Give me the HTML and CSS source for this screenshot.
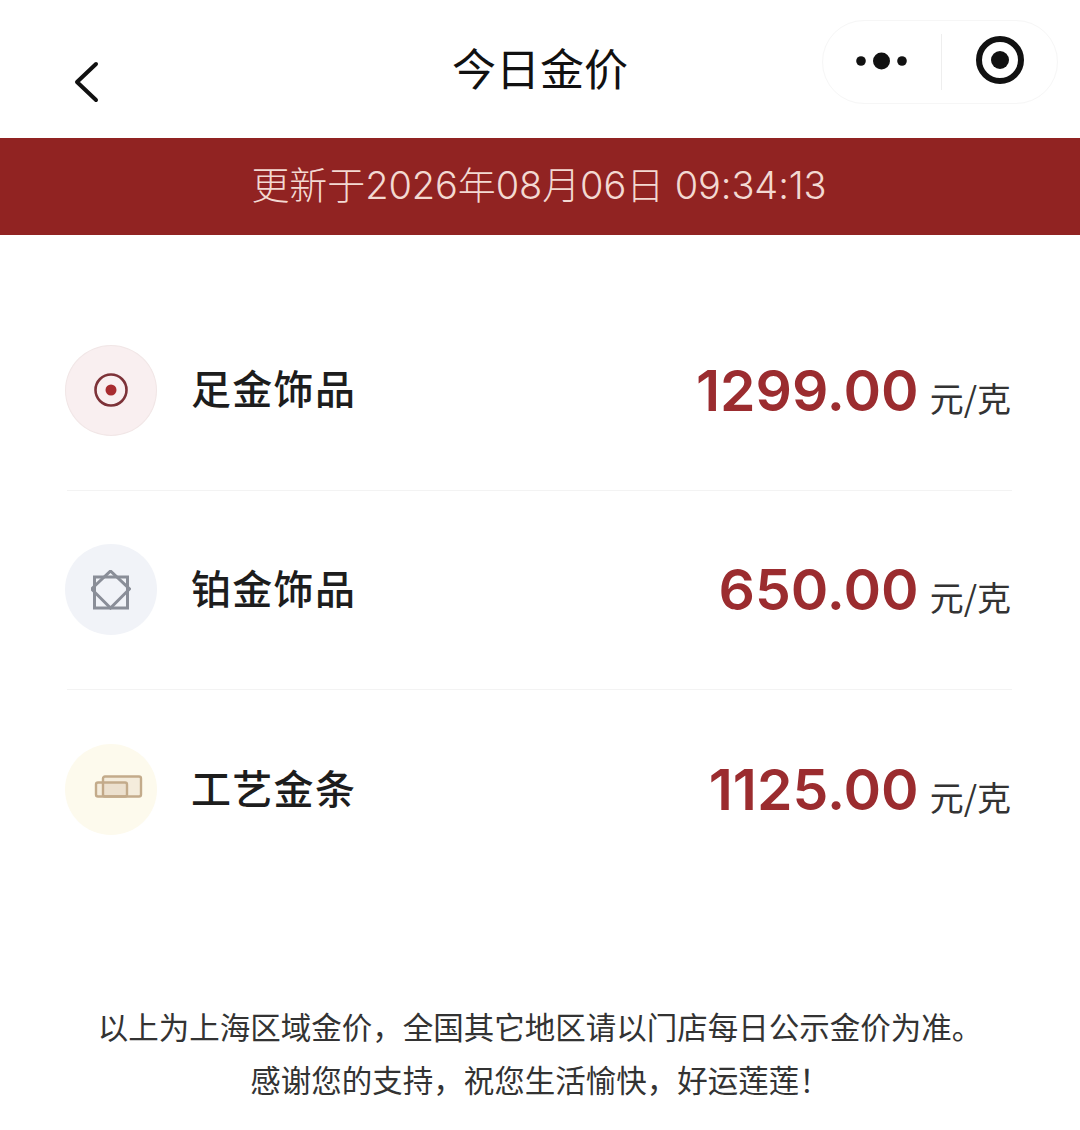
FILE: index.html
```html
<!DOCTYPE html>
<html lang="zh-CN">

<head>
    <meta charset="UTF-8">
    <meta name="viewport" content="width=device-width, initial-scale=1.0">
    <title>今日金价</title>
    <link rel="stylesheet" href="styles.css">
</head>

<body>
    <!-- Nav bar -->
    <header class="nav">
        <button class="back" aria-label="返回">
            <svg width="28" height="42" viewBox="0 0 28 42">
                <path d="M24 3 L5 21 L24 39" fill="none" stroke="#111" stroke-width="4" stroke-linecap="round" stroke-linejoin="round"/>
            </svg>
        </button>
        <h1 class="nav-title">今日金价</h1>
        <div class="capsule">
            <svg class="capsule-more" width="52" height="18" viewBox="0 0 52 18">
                <circle cx="5" cy="9" r="4.8" fill="#111"/>
                <circle cx="25.5" cy="9" r="8.5" fill="#111"/>
                <circle cx="46" cy="9" r="4.8" fill="#111"/>
            </svg>
            <span class="capsule-line"></span>
            <svg class="capsule-close" width="50" height="50" viewBox="0 0 50 50">
                <circle cx="25" cy="25" r="21" fill="none" stroke="#111" stroke-width="6"/>
                <circle cx="25" cy="25" r="9" fill="#111"/>
            </svg>
        </div>
    </header>

    <!-- Update time -->
    <div class="banner">更新于2026年08月06日 09:34:13</div>

    <!-- Prices -->
    <main class="list">
        <div class="row">
            <div class="icon icon-gold">
                <svg width="36" height="36" viewBox="0 0 36 36">
                    <circle cx="18" cy="18" r="15.5" fill="none" stroke="#7d3238" stroke-width="2.6"/>
                    <circle cx="18" cy="18" r="5.5" fill="#a82c30"/>
                </svg>
            </div>
            <div class="name">足金饰品</div>
            <div class="price">1299.00</div>
            <div class="unit">元/克</div>
        </div>
        <div class="row">
            <div class="icon icon-platinum">
                <svg width="40" height="40" viewBox="0 0 40 40">
                    <rect x="3.5" y="7" width="33" height="31" fill="none" stroke="#8a8e98" stroke-width="3"/>
                    <path d="M19.5 1 L38.5 19 L19.5 38 L0.5 19 Z" fill="none" stroke="#8a8e98" stroke-width="3"/>
                </svg>
            </div>
            <div class="name">铂金饰品</div>
            <div class="price">650.00</div>
            <div class="unit">元/克</div>
        </div>
        <div class="row">
            <div class="icon icon-bar">
                <svg width="64" height="30" viewBox="0 0 64 30">
                    <rect x="24" y="1.5" width="38" height="20" rx="2" fill="#be9f78" fill-opacity="0.14" stroke="#c3ab8b" stroke-width="2.4"/>
                    <rect x="17" y="7.5" width="31" height="14" rx="2" fill="#be9f78" fill-opacity="0.14" stroke="#c3ab8b" stroke-width="2.4"/>
                </svg>
            </div>
            <div class="name">工艺金条</div>
            <div class="price">1125.00</div>
            <div class="unit">元/克</div>
        </div>
    </main>

    <footer class="note">
        <p>以上为上海区域金价，全国其它地区请以门店每日公示金价为准。</p>
        <p>感谢您的支持，祝您生活愉快，好运莲莲！</p>
    </footer>
</body>

</html>
```

FILE: styles.css
```css
* {
    box-sizing: border-box;
}

body {
    margin: 0;
    background-color: #fff;
    color: #1a1a1a;
    font-family: "Inter", "Noto Sans CJK SC", sans-serif;
}

.nav {
    display: grid;
    grid-template-columns: 1fr auto 1fr;
    height: 138px;
    padding: 20px 22px 0;
}

.back {
    justify-self: start;
    align-self: start;
    margin: 41px 0 0 50px;
    padding: 0;
    border: none;
    background: none;
    line-height: 0;
}

.nav-title {
    margin: 17px 0 0;
    font-size: 44px;
    line-height: 60px;
    font-weight: 400;
    color: #111;
    font-family: "Noto Sans CJK SC", sans-serif;
}

.capsule {
    justify-self: end;
    display: flex;
    align-items: center;
    width: 236px;
    height: 84px;
    padding: 0 0 0 33px;
    border: 1px solid #f6f6f6;
    border-radius: 42px;
}

.capsule-more {
    margin-bottom: 2px;
}

.capsule-line {
    width: 1px;
    height: 56px;
    margin: 0 33px;
    background-color: #eee;
}

.capsule-close {
    margin-bottom: 4px;
}

.banner {
    height: 97px;
    padding-right: 2px;
    background-color: #912322;
    color: #f3d9d2;
    font-size: 38px;
    font-weight: 300;
    letter-spacing: -0.1px;
    line-height: 95px;
    text-align: center;
}

.list {
    padding: 56px 68px 0 67px;
}

.row {
    display: flex;
    align-items: center;
    height: 199.5px;
    border-bottom: 1px solid #f3f3f3;
}

.row:last-child {
    border-bottom: none;
}

.icon {
    display: flex;
    align-items: center;
    justify-content: center;
    width: 92px;
    height: 91px;
    margin-left: -2px;
    border-radius: 50%;
}

.icon-gold {
    background-color: #f9eff0;
    border: 1px solid #f1e6e6;
}

.icon-platinum {
    background-color: #f1f3f8;
}

.icon-bar {
    background-color: #fdfaed;
}

.name {
    flex: 1;
    margin: -6px 0 0 34px;
    font-family: "Noto Sans CJK SC", sans-serif;
    font-size: 40px;
    font-weight: 500;
    letter-spacing: 1.3px;
    color: #1d1d1d;
}

.price {
    font-size: 57px;
    font-weight: 600;
    color: #9b2c2f;
}

.unit {
    margin: 14px 1px 0 11px;
    font-family: "Noto Sans CJK SC", sans-serif;
    font-size: 34px;
    color: #333;
}

.note {
    margin-top: 110px;
    font-family: "Noto Sans CJK SC", sans-serif;
    font-size: 30.5px;
    line-height: 53px;
    text-align: center;
    color: #333;
}

.note p {
    margin: 0;
}
```
